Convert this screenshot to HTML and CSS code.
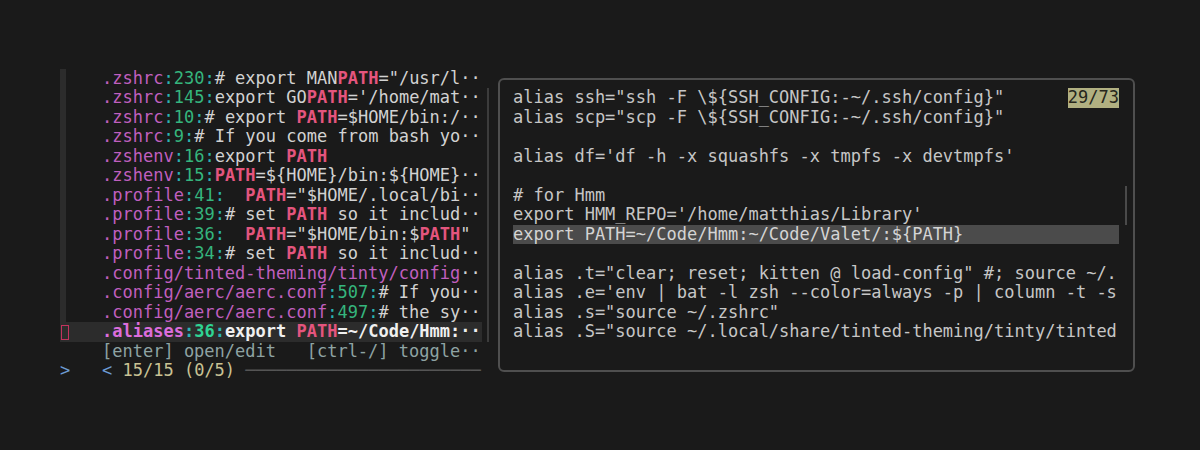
FILE: index.html
```html
<!DOCTYPE html>
<html>
<head>
<meta charset="utf-8">
<link rel="stylesheet" href="styles.css">
</head>
<body>
<div class="screen">
  <div class="list">
    <div class="row"><span class="gut"><span class="bar"></span></span><span class="txt"><span class="p">.zshrc</span><span class="c">:</span><span class="n">230</span><span class="c">:</span># export MAN<span class="m">PATH</span>="/usr/l··</span></div>
    <div class="row"><span class="gut"><span class="bar"></span></span><span class="txt"><span class="p">.zshrc</span><span class="c">:</span><span class="n">145</span><span class="c">:</span>export GO<span class="m">PATH</span>='/home/mat··</span></div>
    <div class="row"><span class="gut"><span class="bar"></span></span><span class="txt"><span class="p">.zshrc</span><span class="c">:</span><span class="n">10</span><span class="c">:</span># export <span class="m">PATH</span>=$HOME/bin:/··</span></div>
    <div class="row"><span class="gut"><span class="bar"></span></span><span class="txt"><span class="p">.zshrc</span><span class="c">:</span><span class="n">9</span><span class="c">:</span># If you come from bash yo··</span></div>
    <div class="row"><span class="gut"><span class="bar"></span></span><span class="txt"><span class="p">.zshenv</span><span class="c">:</span><span class="n">16</span><span class="c">:</span>export <span class="m">PATH</span></span></div>
    <div class="row"><span class="gut"><span class="bar"></span></span><span class="txt"><span class="p">.zshenv</span><span class="c">:</span><span class="n">15</span><span class="c">:</span><span class="m">PATH</span>=${HOME}/bin:${HOME}··</span></div>
    <div class="row"><span class="gut"><span class="bar"></span></span><span class="txt"><span class="p">.profile</span><span class="c">:</span><span class="n">41</span><span class="c">:</span>  <span class="m">PATH</span>="$HOME/.local/bi··</span></div>
    <div class="row"><span class="gut"><span class="bar"></span></span><span class="txt"><span class="p">.profile</span><span class="c">:</span><span class="n">39</span><span class="c">:</span># set <span class="m">PATH</span> so it includ··</span></div>
    <div class="row"><span class="gut"><span class="bar"></span></span><span class="txt"><span class="p">.profile</span><span class="c">:</span><span class="n">36</span><span class="c">:</span>  <span class="m">PATH</span>="$HOME/bin:$<span class="m">PATH</span>"</span></div>
    <div class="row"><span class="gut"><span class="bar"></span></span><span class="txt"><span class="p">.profile</span><span class="c">:</span><span class="n">34</span><span class="c">:</span># set <span class="m">PATH</span> so it includ··</span></div>
    <div class="row"><span class="gut"><span class="bar"></span></span><span class="txt"><span class="p">.config/tinted-theming/tinty/config</span>··</span></div>
    <div class="row"><span class="gut"><span class="bar"></span></span><span class="txt"><span class="p">.config/aerc/aerc.conf</span><span class="c">:</span><span class="n">507</span><span class="c">:</span># If you··</span></div>
    <div class="row"><span class="gut"><span class="bar"></span></span><span class="txt"><span class="p">.config/aerc/aerc.conf</span><span class="c">:</span><span class="n">497</span><span class="c">:</span># the sy··</span></div>
    <div class="row sel"><span class="gut"><span class="ptr"></span></span><span class="txt"><span class="p">.aliases</span><span class="c">:</span><span class="n">36</span><span class="c">:</span>export <span class="m">PATH</span>=~/Code/Hmm:··</span></div>
    <div class="row"><span class="gut"></span><span class="txt hint">[enter] open/edit   [ctrl-/] toggle··</span></div>
    <div class="row"><span class="gut prompt">&gt;</span><span class="txt"><span class="lt">&lt;</span> <span class="info">15/15 (0/5)</span> <span class="rule">───────────────────────</span></span></div>
  </div>
  <div class="lsb"></div>
  <div class="preview">
    <div class="pcontent">
      <div class="pline head"><span>alias ssh="ssh -F \${SSH_CONFIG:-~/.ssh/config}"</span><span class="count">29/73</span></div>
      <div class="pline">alias scp="scp -F \${SSH_CONFIG:-~/.ssh/config}"</div>
      <div class="pline"> </div>
      <div class="pline">alias df='df -h -x squashfs -x tmpfs -x devtmpfs'</div>
      <div class="pline"> </div>
      <div class="pline"># for Hmm</div>
      <div class="pline">export HMM_REPO='/home/matthias/Library'</div>
      <div class="pline hl">export PATH=~/Code/Hmm:~/Code/Valet/:${PATH}</div>
      <div class="pline"> </div>
      <div class="pline">alias .t="clear; reset; kitten @ load-config" #; source ~/.</div>
      <div class="pline">alias .e='env | bat -l zsh --color=always -p | column -t -s</div>
      <div class="pline">alias .s="source ~/.zshrc"</div>
      <div class="pline">alias .S="source ~/.local/share/tinted-theming/tinty/tinted</div>
      <div class="pline"> </div>
    </div>
    <div class="psb"></div>
  </div>
</div>
</body>
</html>
```

FILE: styles.css
```css
html, body {
  margin: 0;
  padding: 0;
  background: #1a1a1a;
}
body {
  width: 1200px;
  height: 450px;
  overflow: hidden;
  font-family: "DejaVu Sans Mono", monospace;
  font-size: 17px;
  line-height: 19.5px;
  color: #d2d2d2;
}
.screen {
  display: flex;
  align-items: flex-start;
  padding: 68.5px 0 0 60px;
}
.list {
  width: 427px;
  display: flex;
  flex-direction: column;
}
.row {
  display: flex;
  height: 19.5px;
  white-space: pre;
}
.row.sel {
  background: #2c2c2c;
  width: 422px;
}
.row.sel .txt { font-weight: bold; color: #f0f0f0; }
.row.sel .p { color: #dc6ddc; }
.row.sel .n { color: #2fd393; }
.gut {
  width: 42px;
  flex: none;
  display: flex;
  align-items: stretch;
}
.bar {
  width: 6px;
  background: #2c2c2c;
}
.ptr {
  box-sizing: border-box;
  width: 8px;
  height: 15px;
  margin: 3px 0 0 1px;
  border: 1.5px solid #c2335e;
}
.prompt {
  color: #6c9bd2;
}
.txt { white-space: pre; }
.p { color: #c05fbf; }
.c { color: #2bb3b3; }
.n { color: #35b57d; }
.m { color: #e4557e; font-weight: bold; }
.hint { color: #8ea3a3; }
.lt { color: #6c9bd2; }
.info { color: #c9c294; }
.rule { color: #555555; }
.lsb {
  width: 1.5px;
  height: 253.5px;
  margin-top: 19.5px;
  background: #3c3c3c;
  flex: none;
}
.preview {
  box-sizing: border-box;
  width: 637px;
  height: 294px;
  margin: 9.5px 0 0 9.5px;
  border: 2px solid #4f4f4f;
  border-radius: 6px;
  padding: 8px 6px 0 13px;
  display: flex;
  align-items: flex-start;
  flex: none;
}
.pcontent {
  width: 606px;
  overflow: hidden;
  flex: none;
}
.pline {
  height: 19.5px;
  white-space: pre;
  overflow: hidden;
  color: #c6c6c6;
}
.pline.head {
  display: flex;
  justify-content: space-between;
}
.count {
  background: #b1b081;
  color: #26261c;
}
.pline.hl {
  background: #4b4b4b;
  color: #d4d4d4;
}
.psb {
  width: 2px;
  height: 39px;
  margin: 97.5px 0 0 6px;
  background: #4a4a4a;
  flex: none;
}
```
